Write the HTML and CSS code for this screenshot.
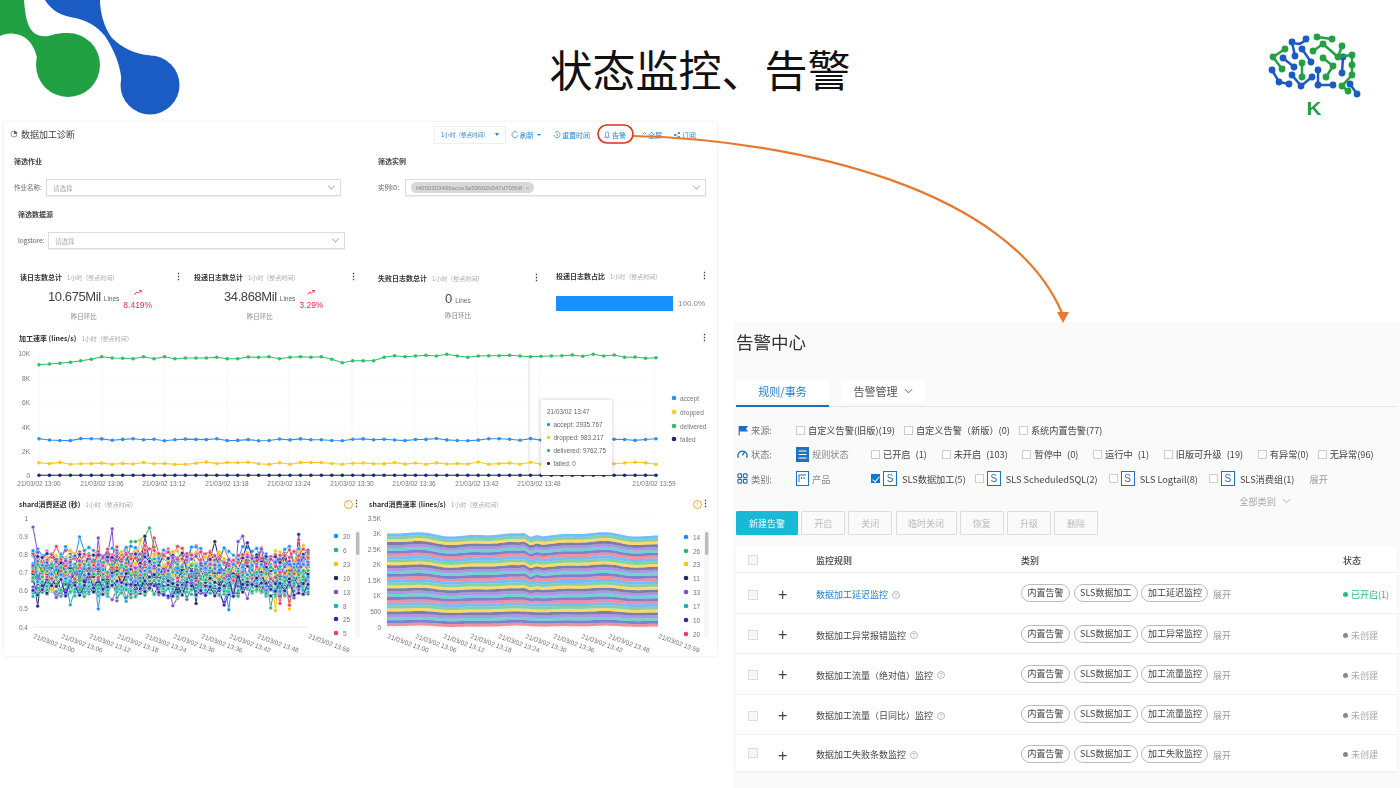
FILE: index.html
```html
<!DOCTYPE html>
<html lang="zh">
<head>
<meta charset="utf-8">
<title>状态监控、告警</title>
<link rel="stylesheet" href="styles.css">
</head>
<body>
<main class="slide">
  <svg class="logo-corner" viewBox="0 0 190 120" aria-hidden="true">
    <circle cx="68" cy="65" r="32" fill="#22a044"/>
    <path fill="#22a044" d="M0 0H24C25 14 27 26 33 32C38 37 46 37 52 35C57 33.5 62 33 68 33V65H38C37 50 30 36 15 34C9 33 4 34 0 36Z"/>
    <circle cx="150" cy="85" r="29.5" fill="#1b5bc4"/>
    <path fill="#1b5bc4" d="M45 0C50 8 57 14 70 17C85 19 97 26 105 36C114 50 121 65 122 85H150V55.5C135 54 122 48 112 38C104 28 100 12 100 0Z"/>
  </svg>

  <h1 class="slide-title">状态监控、告警</h1>

  <div class="logo-brain">
    <svg viewBox="0 0 150 80" aria-hidden="true">
      <g class="net-blue">
        <path d="M52 22Q60 27 66 19"/><path d="M62 29L71 42"/><path d="M52 22L55 36"/><path d="M43 38L54 47"/>
        <path d="M32 50L39 62L49 64"/><path d="M52 55L61 66L72 57"/><path d="M78 50V65H93"/><path d="M103 37L102 53"/><path d="M110 64L117 74"/>
        <circle cx="52" cy="22" r="3.4"/><circle cx="66" cy="19" r="3.4"/><circle cx="62" cy="29" r="3.4"/><circle cx="71" cy="42" r="3.4"/><circle cx="55" cy="36" r="3.4"/>
        <circle cx="43" cy="38" r="3.4"/><circle cx="54" cy="47" r="3.4"/><circle cx="32" cy="50" r="3.4"/><circle cx="39" cy="62" r="3.4"/><circle cx="49" cy="64" r="3.4"/>
        <circle cx="52" cy="55" r="3.4"/><circle cx="61" cy="66" r="3.4"/><circle cx="72" cy="57" r="3.4"/><circle cx="78" cy="50" r="3.4"/><circle cx="78" cy="65" r="3.4"/><circle cx="93" cy="65" r="3.4"/>
        <circle cx="103" cy="37" r="3.4"/><circle cx="102" cy="53" r="3.4"/><circle cx="110" cy="64" r="3.4"/><circle cx="117" cy="74" r="3.4"/>
      </g>
      <g class="net-green">
        <path d="M77 17L92 19"/><path d="M73 31L83 24"/><path d="M83 24L98 37"/><path d="M102 26L98 37L112 35"/><path d="M112 35V55L102 66L108 71"/>
        <path d="M33 37L45 29"/><path d="M33 37L42 49"/><path d="M62 43V57"/><path d="M83 38L93 46L86 57"/>
        <circle cx="77" cy="17" r="3.4"/><circle cx="92" cy="19" r="3.4"/><circle cx="73" cy="31" r="3.4"/><circle cx="83" cy="24" r="3.4"/><circle cx="98" cy="37" r="3.4"/>
        <circle cx="102" cy="26" r="3.4"/><circle cx="112" cy="35" r="3.4"/><circle cx="112" cy="45" r="3.4"/><circle cx="112" cy="55" r="3.4"/><circle cx="102" cy="66" r="3.4"/><circle cx="108" cy="71" r="3.4"/>
        <circle cx="33" cy="37" r="3.4"/><circle cx="45" cy="29" r="3.4"/><circle cx="42" cy="49" r="3.4"/><circle cx="62" cy="43" r="3.4"/><circle cx="62" cy="57" r="3.4"/>
        <circle cx="83" cy="38" r="3.4"/><circle cx="93" cy="46" r="3.4"/><circle cx="86" cy="57" r="3.4"/>
      </g>
    </svg>
    <span class="brain-k">K</span>
  </div>

  <section class="dash">
    <header class="dash-head">
      <div class="dash-title">
        <svg class="ic-s" viewBox="0 0 10 10"><circle cx="5" cy="5" r="3.8" fill="none" stroke="#666" stroke-width=".8"/><path d="M5 5V1.2A3.8 3.8 0 0 1 8.8 5Z" fill="#666"/></svg>
        <span>数据加工诊断</span>
      </div>
      <nav class="dash-tools">
        <span class="range">1小时（整点时间）<i class="caret"></i></span>
        <span class="tool t-refresh"><svg class="ic-s" viewBox="0 0 10 10"><path d="M8 2.2A3.8 3.8 0 1 0 8.8 5" fill="none" stroke="#2b83d4" stroke-width=".9"/></svg>刷新<i class="caret small"></i></span>
        <span class="tool t-reset"><svg class="ic-s" viewBox="0 0 10 10"><path d="M2 2.2A3.8 3.8 0 1 1 1.2 5M5 3V5.3L6.5 6.2" fill="none" stroke="#2b83d4" stroke-width=".9"/></svg>重置时间</span>
        <span class="tool t-alert"><svg class="ic-s" viewBox="0 0 10 10"><path d="M5 1C3.3 1 3 2.5 3 4V6.5L2 7.8H8L7 6.5V4C7 2.5 6.7 1 5 1ZM4.2 8.6H5.8" fill="none" stroke="#2b83d4" stroke-width=".9"/></svg>告警</span>
        <span class="tool t-full"><svg class="ic-xs" viewBox="0 0 6 10"><path d="M1 4L3 2L5 4" fill="none" stroke="#2b83d4"/></svg>全屏</span>
        <span class="tool t-sub"><svg class="ic-s" viewBox="0 0 10 10"><g fill="#2b83d4"><circle cx="7.5" cy="2.5" r="1.3"/><circle cx="2.5" cy="5" r="1.3"/><circle cx="7.5" cy="7.5" r="1.3"/></g><path d="M7.5 2.5L2.5 5L7.5 7.5" stroke="#2b83d4" stroke-width=".6" fill="none"/></svg>订阅</span>
      </nav>
    </header>

    <div class="filters">
      <div class="fblock">
        <h3 class="fblock-title">筛选作业</h3>
        <div class="field"><label class="field-label l-job">作业名称:</label><div class="select"><span class="ph">请选择</span><i class="chev"></i></div></div>
      </div>
      <div class="fblock">
        <h3 class="fblock-title">筛选实例</h3>
        <div class="field"><label class="field-label l-inst">实例ID:</label><div class="select"><span class="chip">f4050303496acce3a59602b547d705b8 <em>×</em></span><i class="chev"></i></div></div>
      </div>
      <div class="fblock shift">
        <h3 class="fblock-title">筛选数据源</h3>
        <div class="field"><label class="field-label l-store">logstore:</label><div class="select"><span class="ph">请选择</span><i class="chev"></i></div></div>
      </div>
    </div>

    <div class="kpis">
      <article class="kpi k1">
        <div class="kpi-head"><b>读日志数总计</b><span class="muted">1小时（整点时间）</span><i class="more">⋮</i></div>
        <div class="kpi-body">
          <div class="kpi-main"><span class="num">10.675Mil</span><span class="unit">Lines</span><div class="kpi-foot">昨日环比</div></div>
          <div class="delta"><svg viewBox="0 0 10 7"><path d="M.5 6L3.5 3L5.5 4.5L9 1M6.5 1H9V3.5" fill="none" stroke="#e8304a" stroke-width="1.2"/></svg><span>8.419%</span></div>
        </div>
      </article>
      <article class="kpi k2">
        <div class="kpi-head"><b>投递日志数总计</b><span class="muted">1小时（整点时间）</span><i class="more">⋮</i></div>
        <div class="kpi-body">
          <div class="kpi-main"><span class="num">34.868Mil</span><span class="unit">Lines</span><div class="kpi-foot">昨日环比</div></div>
          <div class="delta"><svg viewBox="0 0 10 7"><path d="M.5 6L3.5 3L5.5 4.5L9 1M6.5 1H9V3.5" fill="none" stroke="#e8304a" stroke-width="1.2"/></svg><span>3.29%</span></div>
        </div>
      </article>
      <article class="kpi k3">
        <div class="kpi-head"><b>失败日志数总计</b><span class="muted">1小时（整点时间）</span><i class="more">⋮</i></div>
        <div class="kpi-body">
          <div class="kpi-main"><span class="num">0</span><span class="unit">Lines</span><div class="kpi-foot">昨日环比</div></div>
        </div>
      </article>
      <article class="kpi k4">
        <div class="kpi-head"><b>投递日志数占比</b><span class="muted">1小时（整点时间）</span><i class="more">⋮</i></div>
        <div class="ratio"><div class="ratio-bar"></div><span>100.0%</span></div>
      </article>
    </div>

    <div class="chart-wide">
      <div class="chart-head"><b>加工速率 (lines/s)</b><span class="muted">1小时（整点时间）</span><i class="more">⋮</i></div>
      <div class="chart-box">
        <svg id="chart-rate" class="chart" viewBox="4 345 713 147"></svg>
        <div class="tip">
          <p>21/03/02 13:47</p>
          <p><i class="d blue"></i>accept: 2935.767</p>
          <p><i class="d yellow"></i>dropped: 983.217</p>
          <p><i class="d green"></i>delivered: 9762.75</p>
          <p><i class="d navy"></i>failed: 0</p>
        </div>
      </div>
    </div>

    <div class="chart-pair">
      <div class="chart-half">
        <div class="chart-head"><b>shard消费延迟 (秒)</b><span class="muted">1小时（整点时间）</span><i class="warn">!</i><i class="more">⋮</i></div>
        <svg id="chart-delay" class="chart" viewBox="4 511 357 145"></svg>
      </div>
      <div class="chart-half second">
        <div class="chart-head"><b>shard消费速率 (lines/s)</b><span class="muted">1小时（整点时间）</span><i class="warn">!</i><i class="more">⋮</i></div>
        <svg id="chart-speed" class="chart" viewBox="361 511 356 145"></svg>
      </div>
    </div>
  </section>

  <section class="alerts">
    <h2 class="alerts-title">告警中心</h2>
    <div class="tabs">
      <span class="tab active">规则/事务</span>
      <span class="tab">告警管理<svg class="tab-chev" viewBox="0 0 10 6"><path d="M1 1L5 5L9 1" fill="none" stroke="#555"/></svg></span>
    </div>

    <div class="frow">
      <div class="fhead"><svg class="ic" viewBox="0 0 10 10"><path d="M2 1V9.5M2 1.5H9L7.5 3.5L9 5.5H2" fill="#1b6fbe" stroke="#1b6fbe"/></svg><span>来源:</span></div>
      <label class="opt o9"><i class="cb"></i>自定义告警(旧版)(19)</label>
      <label class="opt o9"><i class="cb"></i>自定义告警（新版）(0)</label>
      <label class="opt"><i class="cb"></i>系统内置告警(77)</label>
    </div>
    <div class="frow status-row">
      <div class="fhead"><svg class="ic" viewBox="0 0 12 12"><path d="M1.5 9.5A5 5 0 1 1 10.5 9.5M6 7L8 3.5" fill="none" stroke="#1b6fbe" stroke-width="1.4"/></svg><span>状态:</span></div>
      <div class="fsub"><svg class="ic-box" viewBox="0 0 13 15"><rect width="13" height="15" fill="#1b73c8"/><path d="M2.5 4H10.5M2.5 7.5H10.5M2.5 11H10.5" stroke="#fff" stroke-width="1.2"/></svg><span>规则状态</span></div>
      <label class="opt o14"><i class="cb"></i>已开启 (1)</label>
      <label class="opt o14"><i class="cb"></i>未开启 (103)</label>
      <label class="opt o14"><i class="cb"></i>暂停中 (0)</label>
      <label class="opt o14"><i class="cb"></i>运行中 (1)</label>
      <label class="opt o14"><i class="cb"></i>旧版可升级 (19)</label>
      <label class="opt o9"><i class="cb"></i>有异常(0)</label>
      <label class="opt"><i class="cb"></i>无异常(96)</label>
    </div>
    <div class="frow">
      <div class="fhead"><svg class="ic" viewBox="0 0 12 12"><g fill="none" stroke="#1b6fbe" stroke-width="1.2"><rect x="1" y="1" width="4" height="4" rx=".8"/><rect x="7" y="1" width="4" height="4" rx=".8"/><rect x="1" y="7" width="4" height="4" rx=".8"/><rect x="7" y="7" width="4" height="4" rx=".8"/></g></svg><span>类别:</span></div>
      <div class="fsub"><svg class="ic-box" viewBox="0 0 13 15"><rect x=".5" y=".5" width="12" height="14" fill="#fff" stroke="#1b73c8"/><path d="M3 4H10M3 4V11M5.5 6V8M8 6V8" stroke="#1b73c8" fill="none"/></svg><span>产品</span></div>
      <label class="opt o9"><i class="cb checked"></i><i class="s-box">S</i>SLS数据加工(5)</label>
      <label class="opt o11"><i class="cb"></i><i class="s-box">S</i>SLS ScheduledSQL(2)</label>
      <label class="opt o11"><i class="cb"></i><i class="s-box">S</i>SLS Logtail(8)</label>
      <label class="opt o15"><i class="cb"></i><i class="s-box">S</i>SLS消费组(1)</label>
      <span class="expand-all">展开</span>
    </div>
    <div class="all-cats">全部类别<svg class="tab-chev" viewBox="0 0 10 6"><path d="M1 1L5 5L9 1" fill="none" stroke="#aaa"/></svg></div>

    <div class="actions">
      <button class="btn primary">新建告警</button>
      <button class="btn">开启</button>
      <button class="btn">关闭</button>
      <button class="btn wide">临时关闭</button>
      <button class="btn">恢复</button>
      <button class="btn">升级</button>
      <button class="btn">删除</button>
    </div>

    <div class="table">
      <div class="thead">
        <div class="cell-c"><i class="cb tcb"></i></div><div></div><div>监控规则</div><div>类别</div><div>状态</div>
      </div>
      <div class="trow">
        <div class="cell-c"><i class="cb tcb"></i></div><div class="plus">+</div>
        <div class="rule link">数据加工延迟监控<i class="help">?</i></div>
        <div class="tags"><span class="tag">内置告警</span><span class="tag">SLS数据加工</span><span class="tag">加工延迟监控</span><span class="more-tags">展开</span></div>
        <div class="status on"><i class="dot"></i>已开启(1)</div>
      </div>
      <div class="trow">
        <div class="cell-c"><i class="cb tcb"></i></div><div class="plus">+</div>
        <div class="rule">数据加工异常报错监控<i class="help">?</i></div>
        <div class="tags"><span class="tag">内置告警</span><span class="tag">SLS数据加工</span><span class="tag">加工异常监控</span><span class="more-tags">展开</span></div>
        <div class="status"><i class="dot"></i>未创建</div>
      </div>
      <div class="trow">
        <div class="cell-c"><i class="cb tcb"></i></div><div class="plus">+</div>
        <div class="rule">数据加工流量（绝对值）监控<i class="help">?</i></div>
        <div class="tags"><span class="tag">内置告警</span><span class="tag">SLS数据加工</span><span class="tag">加工流量监控</span><span class="more-tags">展开</span></div>
        <div class="status"><i class="dot"></i>未创建</div>
      </div>
      <div class="trow">
        <div class="cell-c"><i class="cb tcb"></i></div><div class="plus">+</div>
        <div class="rule">数据加工流量（日同比）监控<i class="help">?</i></div>
        <div class="tags"><span class="tag">内置告警</span><span class="tag">SLS数据加工</span><span class="tag">加工流量监控</span><span class="more-tags">展开</span></div>
        <div class="status"><i class="dot"></i>未创建</div>
      </div>
      <div class="trow last">
        <div class="cell-c"><i class="cb tcb"></i></div><div class="plus">+</div>
        <div class="rule">数据加工失败条数监控<i class="help">?</i></div>
        <div class="tags"><span class="tag">内置告警</span><span class="tag">SLS数据加工</span><span class="tag">加工失败监控</span><span class="more-tags">展开</span></div>
        <div class="status"><i class="dot"></i>未创建</div>
      </div>
    </div>
  </section>

  <svg class="overlay" viewBox="0 0 1400 788" aria-hidden="true">
    <rect x="598" y="125" width="35" height="18" rx="9" fill="none" stroke="#e0301e" stroke-width="1.6"/>
    <path d="M633 136C800 140 1010 190 1062 313" fill="none" stroke="#e8792f" stroke-width="2.2"/>
    <path d="M1057 312L1069 312L1063 323Z" fill="#e8792f"/>
  </svg>
</main>
<script src="charts.js"></script>
</body>
</html>
```

FILE: styles.css
```css
* { box-sizing: border-box; }
html, body { margin: 0; padding: 0; background: #fff; }
body { font-family: "Noto Sans CJK SC", "Liberation Sans", sans-serif; color: #333; overflow: hidden; }
i, em { font-style: normal; }
p, h1, h2, h3 { margin: 0; font-weight: normal; }

.slide { position: relative; width: 1400px; height: 788px; overflow: hidden; background: #fff; }

/* free canvas items of the slide */
.logo-corner { position: absolute; left: 0; top: 0; width: 190px; height: 120px; }
.slide-title { position: absolute; left: 0; right: 0; top: 37px; text-align: center; font-size: 43px; line-height: 62px; color: #111; }
.logo-brain { position: absolute; left: 1240px; top: 20px; width: 150px; height: 100px; }
.logo-brain svg { display: block; width: 150px; height: 80px; }
.net-blue path, .net-green path { fill: none; stroke-width: 2.5; }
.net-blue { fill: #1b5bc4; } .net-blue path { stroke: #1b5bc4; }
.net-green { fill: #22a044; } .net-green path { stroke: #22a044; }
.brain-k { position: absolute; left: 65px; top: 78px; width: 18px; font: bold 18px/22px "Liberation Sans", sans-serif; color: #22a044; text-align: center; transform: scaleX(1.15); }
.overlay { position: absolute; left: 0; top: 0; width: 1400px; height: 788px; pointer-events: none; }

/* dashboard */
.dash { position: absolute; left: 4px; top: 122px; width: 713px; height: 534px; background: #fff; box-shadow: 0 0 3px rgba(0,0,0,.1); filter: blur(.35px); }
.dash-head { display: flex; justify-content: space-between; align-items: center; height: 26px; padding: 0 0 0 6px; }
.dash-title { display: flex; align-items: center; gap: 2px; margin-top: -2px; font-size: 9px; color: #444; }
.ic-s { width: 8px; height: 8px; flex: none; margin-right: 1px; }
.ic-xs { width: 5px; height: 8px; flex: none; margin-right: 1px; }
.dash-tools { display: flex; align-items: center; margin-top: -1px; font-size: 7px; color: #2b83d4; padding-right: 21px; }
.range { display: flex; align-items: center; justify-content: space-between; width: 72px; height: 18px; padding: 0 6px; border: 1px solid #eee; font-size: 5.6px; white-space: nowrap; }
.caret { flex: none; width: 0; height: 0; border: 2.5px solid transparent; border-top: 3.5px solid #2b83d4; border-bottom: 0; }
.caret.small { border-width: 2px 2px 0; border-top-color: #2b83d4; margin-left: 3px; }
.tool { display: flex; align-items: center; white-space: nowrap; }
.t-refresh { margin-left: 5px; }
.t-reset { margin-left: 12px; }
.t-alert { margin-left: 13px; }
.t-full { margin-left: 16px; }
.t-sub { margin-left: 11px; }

.filters { display: grid; grid-template-columns: 364px 337px; padding-left: 10px; }
.fblock { height: 53px; }
.fblock.shift { padding-left: 4px; width: 331px; }
.fblock-title { height: 26px; line-height: 26px; font-size: 7px; font-weight: bold; color: #444; }
.field { display: flex; align-items: center; height: 17px; margin-top: 5px; }
.field-label { font-size: 6.5px; margin-top: -2px; color: #666; white-space: nowrap; }
.l-job { width: 32px; } .l-inst { width: 27px; } .l-store { width: 30px; }
.select { flex: 0 0 auto; display: flex; align-items: center; justify-content: space-between; width: 297px; height: 17px; padding: 0 6px; border: 1px solid #ddd; box-shadow: 0 1px 1px rgba(0,0,0,.05); }
.fblock:nth-child(1) .select { width: 295px; }
.fblock:nth-child(2) .select { width: 301px; padding-left: 5px; }
.ph { font-size: 6.5px; color: #aaa; }
.chev { width: 5px; height: 5px; border-right: 1px solid #aaa; border-bottom: 1px solid #aaa; transform: rotate(45deg) translate(-1px,-1px); }
.chip { background: #d8d8d8; border-radius: 6px; height: 11px; padding: 0 5px; font: 6.1px/11px "Liberation Sans", sans-serif; color: #888; white-space: nowrap; }
.chip em { color: #aaa; margin-left: 2px; }

.kpis { display: grid; grid-template-columns: 174px 184px 178px 150px; margin-top: 14px; padding-left: 16px; height: 63px; }
.kpi-head { display: flex; align-items: center; height: 18px; font-size: 7px; white-space: nowrap; }
.k1 .kpi-head { padding-right: 14.5px; }
.k2 .kpi-head { padding-right: 23.5px; }
.k3 .kpi-head { margin-top: 1px; padding-right: 18.5px; }
.k4 .kpi-head { margin-top: -1px; }
.kpi-head b { color: #333; font-size: 7px; }
.muted { color: #aaa; margin-left: 5px; font-size: 6px; }
.more { margin-left: auto; margin-right: -3px; font: bold 9px/1 "Liberation Sans", "Noto Sans CJK SC", sans-serif; color: #444; }
.kpi-body { display: flex; margin-top: 2px; }
.kpi-main { display: grid; grid-template-columns: auto auto; justify-content: center; align-items: baseline; column-gap: 3px; }
.k1 .kpi-main { margin-left: 28px; }
.k2 .kpi-main { margin-left: 30px; }
.k3 .kpi-main { margin-left: 67px; margin-top: 1px; }
.num { font: 13px/18px "Liberation Sans", sans-serif; letter-spacing: -.4px; color: #444; }
.unit { font: 6.5px/8px "Liberation Sans", sans-serif; color: #666; }
.kpi-foot { grid-column: 1 / 3; font-size: 6.5px; line-height: 14px; color: #888; text-align: center; margin-top: 3px; }
.k3 .kpi-foot { margin-top: 0; text-align: right; }
.delta { display: flex; flex-direction: column; align-items: center; margin: 0 0 0 4px; font: 8.5px/11px "Liberation Sans", sans-serif; color: #e8304a; }
.delta svg { width: 8px; height: 7px; margin: 1px 0 4px; }
.ratio { display: flex; align-items: center; gap: 5px; margin-top: 11px; font: 8px/15px "Liberation Sans", sans-serif; color: #888; }
.ratio-bar { width: 117px; height: 15px; background: #1890ff; }

.chart-wide { height: 161px; }
.chart-head { display: flex; align-items: center; height: 14px; padding-left: 15px; padding-right: 11.5px; font-size: 6px; white-space: nowrap; }
.chart-head b { font-size: 7px; color: #333; }
.chart { display: block; width: 100%; }
.chart-box { position: relative; }
#chart-rate { height: 147px; }
#chart-delay, #chart-speed { height: 145px; }
.chart-text { font: 6.5px "Liberation Sans", sans-serif; fill: #777; }
.tip { position: absolute; left: 537px; top: 55px; width: 71px; height: 75px; padding: 4.5px 6px; background: #fff; box-shadow: 0 0 4px rgba(0,0,0,.22); font: 6.4px/13px "Liberation Sans", sans-serif; color: #666; white-space: nowrap; }
.tip .d { display: inline-block; width: 2.5px; height: 2.5px; border-radius: 50%; margin-right: 4px; vertical-align: 1px; }
.blue { background: #1890ff; } .yellow { background: #ffc107; } .green { background: #2fb36c; } .navy { background: #1f2a6b; }

.chart-pair { display: grid; grid-template-columns: 357px 356px; margin-top: 5px; }
.chart-half .chart-head { padding-right: 3.5px; }
.second .chart-head { padding-left: 8px; padding-right: 10px; }
.warn { margin-left: auto; width: 9px; height: 9px; border: 1px solid #f5a623; border-radius: 50%; font: 6px/7px "Liberation Sans", sans-serif; color: #f5a623; text-align: center; }
.warn + .more { margin-left: -1px; }

/* alert centre */
.alerts { position: absolute; left: 733px; top: 322px; width: 667px; height: 466px; padding-left: 3px; background: #fafafa; filter: blur(.3px); }
.alerts-title { height: 28px; margin-top: 6px; font-size: 17.5px; line-height: 28px; color: #333; }
.tabs { display: flex; height: 27px; margin-top: 24px; margin-right: 3px; border-bottom: 1px solid #e4e4e4; font-size: 11px; color: #555; }
.tab { display: flex; align-items: center; justify-content: center; width: 84px; height: 23px; margin-left: 12px; padding-bottom: 2px; background: #fff; }
.tab.active { width: 93px; height: 27px; margin: 0 0 -1px; padding-bottom: 4px; color: #1f7fd0; border-bottom: 2px solid #1b6fbe; background: linear-gradient(#fff 85%, #fafafa 85%); }
.tab-chev { width: 9px; height: 6px; margin-left: 6px; }

.frow { display: flex; align-items: center; height: 24.3px; font-size: 9.2px; color: #444; white-space: nowrap; }
.tabs + .frow { margin-top: 11px; }
.status-row .opt { word-spacing: 3px; }
.fhead { flex: none; display: flex; align-items: center; width: 60px; color: #777; padding-left: 1px; gap: 3px; }
.ic { width: 11px; height: 11px; flex: none; }
.fsub { flex: none; display: flex; align-items: center; width: 75px; color: #888; gap: 3px; }
.ic-box { width: 13px; height: 15px; flex: none; }
.opt { display: flex; align-items: center; flex: none; }
.o9 { margin-right: 9px; } .o11 { margin-right: 11px; } .o14 { margin-right: 14.7px; } .o15 { margin-right: 15px; }
.cb { display: inline-block; flex: none; width: 9px; height: 9px; margin-right: 3px; background: #fff; border: 1px solid #ccc; position: relative; }
.cb.checked { background: #1b73c8; border-color: #1b73c8; }
.cb.checked::after { content: ""; position: absolute; left: 2px; top: 0; width: 3px; height: 6px; border-right: 1.5px solid #fff; border-bottom: 1.5px solid #fff; transform: rotate(40deg); }
.s-box { flex: none; width: 14px; height: 15px; margin-right: 5px; border: 1px solid #1b73c8; background: #fff; color: #1b73c8; font: 10px/13px "Liberation Sans", sans-serif; text-align: center; }
.expand-all { color: #999; }
.all-cats { display: flex; align-items: center; justify-content: flex-end; height: 20px; padding-right: 109px; font-size: 9.2px; color: #aaa; }
.actions { display: flex; gap: 3.2px; margin-top: .6px; height: 24px; }
.btn { width: 44px; height: 24px; padding: 0; border: 1px solid #ddd; border-radius: 1px; background: #fafafa; font: 9px "Noto Sans CJK SC", sans-serif; color: #bbb; }
.btn.primary { width: 62px; background: #17b9d6; border-color: #17b9d6; color: #fff; }
.btn.wide { width: 61px; }

.table { width: 661px; margin-top: 11px; background: #fff; box-shadow: 0 1px 2px rgba(0,0,0,.05); }
.thead, .trow { display: grid; grid-template-columns: 34px 46px 205px 322px 54px; align-items: center; font-size: 9px; color: #444; }
.thead { height: 27px; padding-top: 2px; border-bottom: 1px solid #eee; font-weight: 500; }
.trow { height: 40.4px; padding-top: 3px; border-bottom: 1px solid #eee; }
.trow.last { height: 36px; align-items: start; padding-top: 13px; border-bottom: 0; }
.cell-c { display: flex; justify-content: center; }
.tcb { width: 10px; height: 10px; margin: 0; background: #f7f7f7; border-color: #ddd; }
.plus { padding-left: 8px; font: 16px/16px "Liberation Sans", sans-serif; color: #444; }
.rule { display: flex; align-items: center; }
.rule.link { color: #1f7fd0; }
.help { width: 8px; height: 8px; margin-left: 4px; border: 1px solid #bbb; border-radius: 50%; font: 6px/6px "Liberation Sans", sans-serif; color: #aaa; text-align: center; }
.tags { display: flex; align-items: center; gap: 3.5px; }
.tag { display: block; height: 18px; padding: 0 5.5px; margin-top: -3px; border: 1px solid #bbb; border-radius: 9px; line-height: 15px; color: #444; white-space: nowrap; }
.more-tags { color: #999; margin-left: 1px; }
.status { display: flex; align-items: center; gap: 3px; color: #aaa; white-space: nowrap; }
.status .dot { width: 5px; height: 5px; border-radius: 50%; background: #888; }
.status.on { color: #2bbd7e; }
.status.on .dot { background: #2bbd7e; }
```

FILE: charts.js
```js
(function () {
  var PAL = ['#1890ff', '#2fb36c', '#ffc107', '#1f2a6b', '#7c4dd6', '#12b5b0', '#2b2bb0', '#e8445f'];
  var seed = 1234;
  function rnd() {
    seed = (seed + 0x6D2B79F5) | 0;
    var t = Math.imul(seed ^ (seed >>> 15), 1 | seed);
    t = (t + Math.imul(t ^ (t >>> 7), 61 | t)) ^ t;
    return ((t ^ (t >>> 14)) >>> 0) / 4294967296;
  }
  function label(x, y, s, anchor, extra) {
    return '<text class="chart-text" x="' + x + '" y="' + y + '" text-anchor="' + (anchor || 'start') + '"' + (extra || '') + '>' + s + '</text>';
  }
  function line(x1, y1, x2, y2, c) {
    return '<line x1="' + x1 + '" y1="' + y1 + '" x2="' + x2 + '" y2="' + y2 + '" stroke="' + c + '" stroke-width=".6"/>';
  }
  function poly(pts, c, w) {
    return '<polyline fill="none" stroke="' + c + '" stroke-width="' + w + '" points="' + pts.map(function (p) { return p[0].toFixed(1) + ',' + p[1].toFixed(1); }).join(' ') + '"/>';
  }
  function dots(pts, c, r, edge) {
    return pts.map(function (p) {
      return '<circle cx="' + p[0].toFixed(1) + '" cy="' + p[1].toFixed(1) + '" r="' + r + '" fill="' + c + '"' + (edge ? ' stroke="#fff" stroke-width=".5"' : '') + '/>';
    }).join('');
  }
  function legend(items, xDot, xText, ys, colors) {
    return items.map(function (s, i) {
      return '<circle cx="' + xDot + '" cy="' + ys[i] + '" r="2.3" fill="' + colors[i] + '"/>' + label(xText, ys[i] + 2.5, s);
    }).join('');
  }

  /* processing rate */
  (function () {
    var x0 = 39, dx = (656 - 39) / 59, out = '';
    var ys = [[353, '10K'], [378, '8K'], [402, '6K'], [427, '4K'], [451, '2K'], [475, '0']];
    ys.forEach(function (r) { out += line(x0, r[0], 656, r[0], '#f6f6f6') + label(30, r[0] + 2.5, r[1], 'end'); });
    var ticks = [[39, '13:00'], [102, '13:06'], [164, '13:12'], [227, '13:18'], [289, '13:24'], [352, '13:30'], [414, '13:36'], [477, '13:42'], [539, '13:48'], [654, '13:59']];
    ticks.forEach(function (t) { out += line(t[0], 355, t[0], 475, '#f1f1f1') + label(t[0], 485.5, '21/03/02 ' + t[1], 'middle'); });
    out += line(x0, 475, 656, 475, '#ddd');
    out += line(529, 356, 529, 475, '#ccc');
    var g = [104, 102, 100, 97, 92, 88, 80, 84, 85, 86, 80, 86, 80, 86, 84, 84, 84, 82, 86, 86, 81, 82, 80, 86, 82, 80, 82, 80, 88, 98, 92, 92, 92, 82, 77, 80, 78, 76, 78, 73, 78, 82, 78, 77, 77, 76, 78, 80, 79, 78, 77, 75, 79, 73, 78, 75, 82, 81, 85, 83];
    function series(fn) { var a = []; for (var i = 0; i < 60; i++) a.push([x0 + i * dx, fn(i)]); return a; }
    var sets = [
      [series(function (i) { return 330 + g[i] / 3; }), '#2fbf6a'],
      [series(function () { return 438.5 + rnd() * 2.2; }), '#2f8ff0'],
      [series(function () { return 462 + rnd() * 2.4; }), '#ffc720'],
      [series(function () { return 475.3; }), PAL[3]]
    ];
    sets.forEach(function (s) { out += poly(s[0], s[1], 1.1) + dots(s[0], s[1], 1.8); });
    out += legend(['accept', 'dropped', 'delivered', 'failed'], 674, 680, [398, 412, 426, 439], ['#2f8ff0', '#ffc720', '#2fbf6a', PAL[3]]);
    document.getElementById('chart-rate').innerHTML = out;
  })();

  var TIMES = ['13:00', '13:06', '13:12', '13:18', '13:24', '13:30', '13:36', '13:42', '13:48', '13:59'];
  function slanted(starts, y) {
    return starts.map(function (x, i) {
      return label(x, y, '21/03/02 ' + TIMES[i], 'start', ' transform="rotate(20 ' + x + ' ' + y + ')"');
    }).join('');
  }
  function scrollbar(x) {
    return '<rect x="' + (x - 1) + '" y="530" width="5" height="108" fill="#f7f7f7"/><rect x="' + x + '" y="532" width="3.4" height="23" rx="1.5" fill="#bbb"/>';
  }

  /* shard delay */
  (function () {
    var x0 = 33, x1 = 308, dx = (x1 - x0) / 59, out = '';
    function Y(v) { return 627 - (v - .4) / .6 * 109; }
    [1, .9, .8, .7, .6, .5, .4].forEach(function (v) {
      out += line(x0, Y(v), x1, Y(v), v === .4 ? '#ddd' : '#f7f7f7') + label(28, Y(v) + 2.5, String(v), 'end');
    });
    out += slanted([33, 61, 89, 117, 145, 173, 201, 229, 257, 308], 638);
    var N = 34, spec = {};
    spec['4:0'] = .95; spec['4:1'] = .81;
    spec['3:1'] = .515;
    spec['1:21'] = .87; spec['1:22'] = .87; spec['1:23'] = .88; spec['1:24'] = .9; spec['1:25'] = .945; spec['1:26'] = .84;
    spec['4:44'] = .87; spec['4:45'] = .9; spec['4:46'] = .78;
    spec['4:14'] = .89; spec['4:17'] = .94; spec['4:16'] = .8;
    spec['0:42'] = .495;
    spec['0:14'] = .5;
    spec['2:52'] = .49; spec['2:55'] = .5;
    spec['7:53'] = .53; spec['7:55'] = .52; spec['7:57'] = .88;
    spec['6:57'] = .91;
    spec['1:51'] = .505;
    spec['3:39'] = .87; spec['3:35'] = .53; spec['3:24'] = .9;
    for (var s = 0; s < N; s++) {
      var c = PAL[s % 8], base = .6 + rnd() * .2, pts = [];
      for (var i = 0; i < 60; i++) {
        var v = base + (rnd() - .5) * .1;
        if (rnd() < .06) v += (rnd() - .5) * .16;
        var key = (s < 8 ? s : -1) + ':' + i;
        if (spec[key] !== undefined) v = spec[key];
        pts.push([x0 + i * dx, Y(v)]);
      }
      out += poly(pts, c, 1) + dots(pts, c, 1.9, true);
    }
    out += legend(['20', '6', '23', '10', '13', '8', '25', '5'], 336, 343, [536, 550, 564, 578, 592, 606, 619, 633], PAL);
    out += scrollbar(356);
    document.getElementById('chart-delay').innerHTML = out;
  })();

  /* shard speed: stacked area */
  (function () {
    var x0 = 387, x1 = 658, N = 32, M = 90, dx = (x1 - x0) / (M - 1), out = '';
    function Y(v) { return 627 - v / 3500 * 109; }
    [[3500, '3.5K'], [3000, '3K'], [2500, '2.5K'], [2000, '2K'], [1500, '1.5K'], [1000, '1K'], [500, '500'], [0, '0']].forEach(function (r) {
      out += line(x0, Y(r[0]), x1, Y(r[0]), r[0] === 0 ? '#ddd' : '#f7f7f7') + label(381, Y(r[0]) + 2.5, r[1], 'end');
    });
    out += slanted([387, 415, 443, 470, 498, 525, 553, 581, 608, 658], 638);
    function wave() {
      var a = rnd() * 6, b = rnd() * 6, c = rnd() * 6, res = [];
      for (var i = 0; i < M; i++) res.push(Math.sin(i / 5 + a) * .5 + Math.sin(i / 2.4 + b) * .3 + Math.sin(i / 9 + c) * .3);
      return res;
    }
    function dip(i) { var d = (i - 47) / 3; return Math.exp(-d * d); }
    var cum = [], base = wave(), common = wave();
    for (var i = 0; i < M; i++) cum.push(25 + base[i] * 25);
    for (var s = N - 1; s >= 0; s--) {
      var w = wave(), top = [];
      for (var j = 0; j < M; j++) {
        top.push(cum[j] + 92 + common[j] * 2 + w[j] * 1.5 + (s > 14 && s < 26 ? Math.sin(j * 1.3) * dip(j) * 5 : 0));
      }
      var pts = [];
      for (var k = 0; k < M; k++) pts.push((x0 + k * dx).toFixed(1) + ',' + Y(top[k]).toFixed(1));
      for (var m = M - 1; m >= 0; m--) pts.push((x0 + m * dx).toFixed(1) + ',' + Y(cum[m]).toFixed(1));
      out += '<polygon fill="' + PAL[s % 8] + '" fill-opacity=".6" points="' + pts.join(' ') + '"/>';
      cum = top;
    }
    out += legend(['14', '26', '23', '11', '33', '17', '10', '20'], 686, 693, [537, 551, 564, 578, 592, 606, 620, 634], PAL);
    out += scrollbar(705);
    document.getElementById('chart-speed').innerHTML = out;
  })();
})();
```
